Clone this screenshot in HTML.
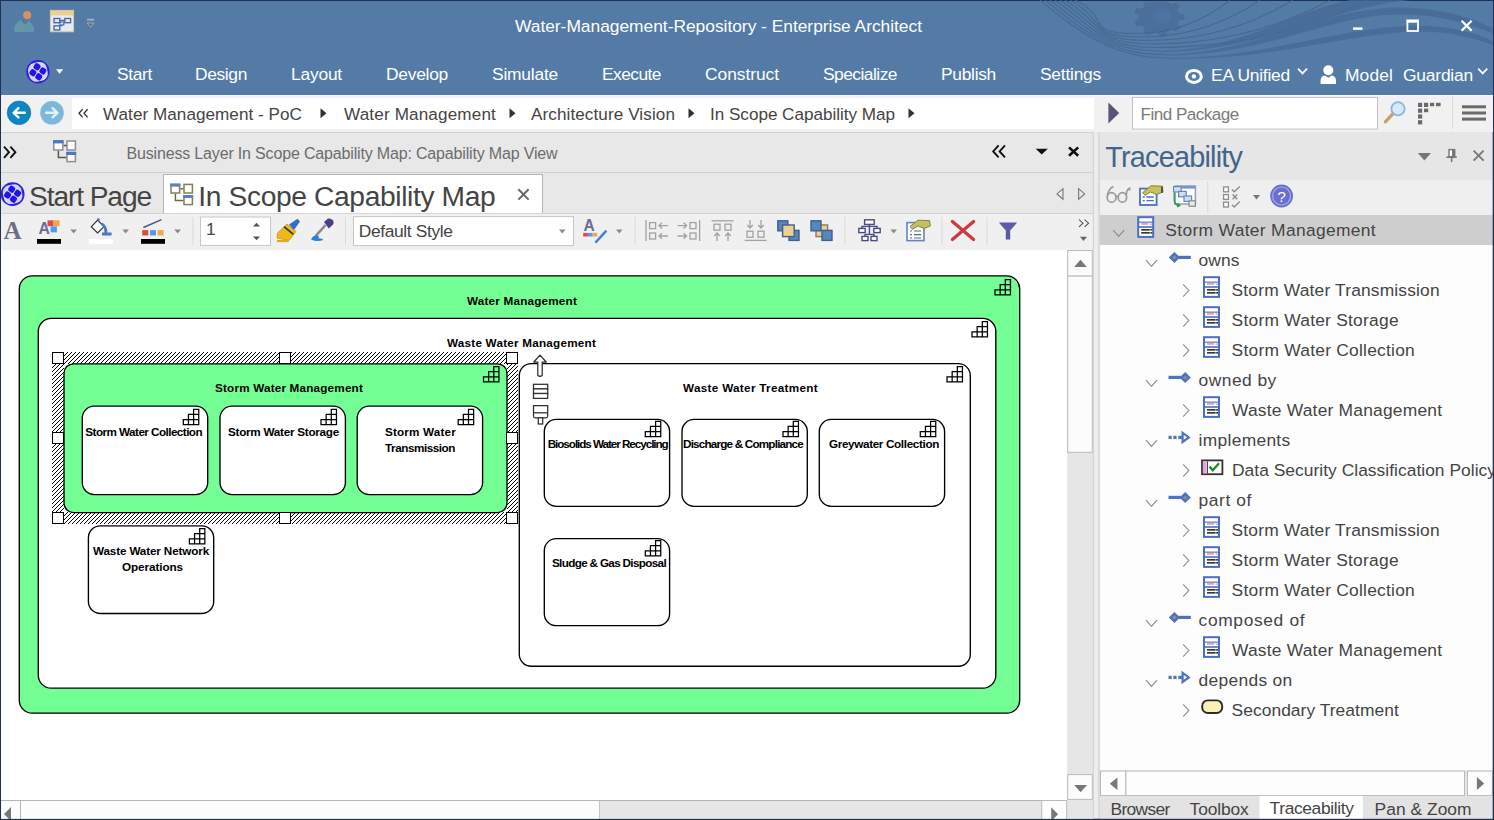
<!DOCTYPE html>
<html lang="en">
<head>
<meta charset="utf-8">
<title>Water-Management-Repository - Enterprise Architect</title>
<style>
*{box-sizing:border-box;margin:0;padding:0}
html,body{width:1494px;height:820px;overflow:hidden;background:#fff}
body{position:relative;font-family:"Liberation Sans",sans-serif;color:#444}
.a{position:absolute}
.t{position:absolute;white-space:nowrap;line-height:1;transform:translateY(-50%)}
.b{position:absolute;white-space:nowrap;line-height:1;transform:translate(-50%,-50%);font-weight:bold;color:#000;font-size:11.7px}
svg{position:absolute;overflow:visible}
/* title + ribbon */
#hdr{left:0;top:0;width:1494px;height:95px;background:#547ba6}
#hdr .t{color:#fff;font-size:17.4px}
/* address bar */
#addr{left:0;top:95px;width:1494px;height:37px;background:#f1f1f1}
#crumb{left:72px;top:97.7px;width:1022px;height:31.3px;background:#fff}
#addrtxt .t{font-size:17.1px;color:#444}
/* left doc area */
#dock{left:0;top:132px;width:1094px;height:688px;background:#e8e8e8}
#pbar{left:0;top:132px;width:1094px;height:40px;background:#e8e8e8;border-top:1px solid #d2d2d2}
#tabs{left:0;top:172px;width:1094px;height:41px;background:#e8e8e8;border-top:1px solid #d0d0d0}
#tabact{left:163px;top:174px;width:380px;height:40px;background:#fff;border:1px solid #b4b4b4;border-bottom:none}
#tbar{left:0;top:213px;width:1094px;height:37px;background:#f0f0f0;border-top:1px solid #d4d4d4}
#canvas{left:1px;top:250px;width:1067px;height:550px;background:#fff}
/* scrollbars */
.sbtn{position:absolute;background:#fff;border:1px solid #d0d0d0}
/* diagram */
.box{position:absolute;border:1.4px solid #000;background:#fff}

/* right panel */
#rp{left:1100px;top:132px;width:394px;height:688px;background:#fdfdfd}
#rph{left:1100px;top:132px;width:394px;height:48px;background:#e6e6e6}
#rpt{left:1100px;top:180px;width:394px;height:35px;background:#efefef}
#rsel{left:1100px;top:215px;width:394px;height:30px;background:#cecece}
#rp .t,.tr{font-size:17.4px;color:#444}
</style>
</head>
<body>
<!-- ===== header ===== -->
<div id="hdr" class="a">
  <div class="a" style="left:0;top:0;width:1494px;height:1.4px;background:#1f3050"></div>
  <div class="a" style="left:0;top:0;width:1.2px;height:820px;background:#1f3050;z-index:50"></div><div class="a" style="left:1492.8px;top:0;width:1.2px;height:820px;background:#1f3050;z-index:50"></div>
  <svg style="left:0;top:0" width="1494" height="95" viewBox="0 0 1494 95">
    <!-- decorative waves -->
<g fill-opacity=".7"><clipPath id="gclip"><path d="M1100,1.4 H1230 V60 H1100Z"/></clipPath><g clip-path="url(#gclip)"><polygon points="1184.3,14.4 1184.3,19.6 1179.0,20.5 1177.2,24.4 1180.5,27.7 1176.2,31.7 1171.4,29.7 1166.9,31.8 1166.6,36.0 1160.1,36.9 1158.1,33.0 1152.9,32.3 1149.2,35.4 1143.5,32.8 1145.1,28.8 1141.7,25.6 1136.4,26.2 1134.1,21.3 1138.7,19.1 1138.7,14.9 1134.1,12.7 1136.4,7.8 1141.7,8.4 1145.1,5.2 1143.5,1.2 1149.2,-1.4 1152.9,1.7 1158.1,1.0 1160.1,-2.9 1166.6,-2.0 1166.9,2.2 1171.4,4.3 1176.2,2.3 1180.5,6.3 1177.2,9.6 1179.0,13.5" fill="#466b96"/><ellipse cx="1162" cy="16" rx="9.5" ry="7.6" fill="#4f76a3"/></g></g>
<g fill="none" stroke="#41658f" stroke-opacity=".8" stroke-width="1.1">
<path d="M1040,0 C1078.0,31.9 1113.0,58.0 1168.0,58.0 "/>
<path d="M1045,0 C1083.0,30.0 1108.5,54.5 1163.5,54.5 "/>
<path d="M1050,0 C1088.0,28.1 1104.0,51.0 1159.0,51.0 "/>
<path d="M1055,0 C1093.0,26.1 1099.5,47.5 1154.5,47.5 Q1271.9,47.5 1368,0"/>
<path d="M1060,0 C1098.0,24.2 1095.0,44.0 1150.0,44.0 Q1249.0,44.0 1330,0"/>
<path d="M1065,0 C1103.0,22.3 1090.5,40.5 1145.5,40.5 Q1226.6,40.5 1293,0"/>
<path d="M1070,0 C1108.0,20.4 1086.0,37.0 1141.0,37.0 Q1206.5,37.0 1260,0"/>
<path d="M1075,0 C1113.0,18.4 1081.5,33.5 1136.5,33.5 Q1187.9,33.5 1230,0"/>
</g>
<g fill="#456a96" fill-opacity=".8">
<path d="M1168,58 C1260,58 1330,30 1405,26 C1445,24 1475,32 1494,42 L1494,46 C1470,36 1440,30 1405,32 C1340,36 1270,60 1168,59Z"/>
<path d="M1163,54.5 C1250,54 1310,14 1385,8 C1430,5 1470,16 1494,29 L1494,34 C1465,22 1430,12 1385,15 C1320,20 1260,56 1163,55.5Z"/>
<path d="M1159,51 C1240,50 1290,12 1350,0 L1410,0 C1330,8 1260,52 1159,52Z"/>
</g>
    <!-- person/mountain icon -->
    <circle cx="27.2" cy="15.1" r="4.1" fill="#d8905e"/>
    <path d="M14.4,32 V26 L20.2,19.8 L25,25 L29.2,20.8 L33.9,27 V32 Z" fill="#6397a8"/>
    <!-- diagram icon -->
    <rect x="50.4" y="10.4" width="23.2" height="21.4" fill="#e6ebf2" stroke="#d8c4a2" stroke-width="1"/>
    <rect x="51" y="11" width="22" height="4.4" fill="#ecd092"/>
    <g fill="#dce8f8" stroke="#4667a0" stroke-width="1.35"><rect x="54" y="18.5" width="5.8" height="4.2"/><rect x="64.8" y="18.5" width="5.8" height="4.2"/><rect x="54" y="25.8" width="5.8" height="4.2"/><rect x="60" y="22" width="3.8" height="3" stroke-width="1.1"/></g>
    <path d="M59.8,20.4h5 M59.8,25.6h2.4" stroke="#4667a0" stroke-width="1.1" fill="none"/>
    <!-- qat dropdown -->
    <rect x="87" y="18.8" width="7.2" height="1.7" fill="#a9b3c4"/>
    <path d="M87,23 h7.2 l-3.6,4.4z" fill="#6b6f7a" stroke="#aab6c8" stroke-width=".8"/>
    <!-- globe logo -->
    <circle cx="37.9" cy="71.8" r="11.7" fill="#2a20e2"/><rect x="28.4" y="62.3" width="19" height="19" rx="7.4" fill="#d8d4ff" transform="rotate(-12 37.9 71.8)"/><g fill="#2016e4" transform="rotate(-10 37.9 71.8)"><rect x="34.75" y="63.55" width="6.3" height="6.3" rx="2" transform="rotate(45 37.9 66.7)"/><rect x="39.85" y="68.65" width="6.3" height="6.3" rx="2" transform="rotate(45 43.0 71.8)"/><rect x="34.75" y="73.75" width="6.3" height="6.3" rx="2" transform="rotate(45 37.9 76.9)"/><rect x="29.65" y="68.65" width="6.3" height="6.3" rx="2" transform="rotate(45 32.8 71.8)"/></g>
    <path d="M56,69.2 h7.2 l-3.6,4.6z" fill="#fff"/>
    <!-- window buttons -->
    <rect x="1353" y="27.4" width="9.5" height="2.4" fill="#fff"/>
    <rect x="1407.4" y="20.6" width="10.6" height="10.4" fill="none" stroke="#fff" stroke-width="1.8"/><rect x="1406.5" y="19.7" width="12.4" height="3" fill="#fff"/>
    <path d="M1461.6,20.8 L1471.6,30.8 M1471.6,20.8 L1461.6,30.8" stroke="#fff" stroke-width="2.3"/>
    <!-- eye -->
    <ellipse cx="1193.9" cy="76.4" rx="7.4" ry="6" fill="none" stroke="#fff" stroke-width="3"/><circle cx="1193.9" cy="76.4" r="2.2" fill="#fff"/>
    <path d="M1298,68.6 l4.5,4.8 l4.5,-4.8" fill="none" stroke="#fff" stroke-width="1.7"/>
    <path d="M1478.2,68.6 l4.5,4.8 l4.5,-4.8" fill="none" stroke="#fff" stroke-width="1.7"/>
    <!-- user -->
    <circle cx="1328.3" cy="70.2" r="5" fill="#fff"/><path d="M1320.6,84 v-3.4 q0,-4.6 4.4,-5.2 l3.3,2.4 l3.3,-2.4 q4.4,.6 4.4,5.2 v3.4z" fill="#fff"/>
  </svg>

  <span class="t" style="letter-spacing:-0.024px;left:515px;top:27px">Water-Management-Repository - Enterprise Architect</span>
  <span class="t" style="letter-spacing:-0.347px;left:117px;top:75px">Start</span>
  <span class="t" style="letter-spacing:-0.357px;left:195px;top:75px">Design</span>
  <span class="t" style="letter-spacing:-0.203px;left:291px;top:75px">Layout</span>
  <span class="t" style="letter-spacing:-0.259px;left:386px;top:75px">Develop</span>
  <span class="t" style="letter-spacing:-0.209px;left:492px;top:75px">Simulate</span>
  <span class="t" style="letter-spacing:-0.549px;left:602px;top:75px">Execute</span>
  <span class="t" style="letter-spacing:-0.047px;left:705px;top:75px">Construct</span>
  <span class="t" style="letter-spacing:-0.528px;left:823px;top:75px">Specialize</span>
  <span class="t" style="letter-spacing:-0.292px;left:941px;top:75px">Publish</span>
  <span class="t" style="letter-spacing:-0.230px;left:1040px;top:75px">Settings</span>
  <span class="t" style="letter-spacing:-0.222px;left:1211px;top:76px">EA Unified</span>
  <span class="t" style="letter-spacing:0.125px;left:1345px;top:76px">Model</span>
  <span class="t" style="letter-spacing:-0.193px;left:1403px;top:76px">Guardian</span>
</div>
<!-- ===== address bar ===== -->
<div id="addr" class="a"></div>
<div id="crumb" class="a"></div>
<div id="addrtxt">
  <div class="a" style="left:0;top:95px;width:1494px;height:1px;background:#f7fafc"></div>
  <svg style="left:0;top:95px" width="1494" height="38" viewBox="0 95 1494 38">
    <circle cx="19" cy="112.8" r="11.8" fill="#0f86c4"/><circle cx="19" cy="112.8" r="11.8" fill="none" stroke="#0a6ea6" stroke-width="1" stroke-opacity=".6"/>
    <path d="M24.8,112.8 H14 M18.4,108.2 L13.6,112.8 L18.4,117.4" fill="none" stroke="#fff" stroke-width="2.4" stroke-linecap="round" stroke-linejoin="round"/>
    <circle cx="52" cy="112.8" r="11.8" fill="#7db7da"/>
    <path d="M46.2,112.8 H57 M52.6,108.2 L57.4,112.8 L52.6,117.4" fill="none" stroke="#e4f1f9" stroke-width="2.4" stroke-linecap="round" stroke-linejoin="round"/>
    <path d="M82.6,109.2 l-3.6,4.1 l3.6,4.1 M87.6,109.2 l-3.6,4.1 l3.6,4.1" fill="none" stroke="#333" stroke-width="1.3"/>
    <g fill="#333"><path d="M320.5,108.3 l6,5 l-6,5z"/><path d="M509.5,108.3 l6,5 l-6,5z"/><path d="M688.5,108.3 l6,5 l-6,5z"/><path d="M908.5,108.3 l6,5 l-6,5z"/></g>
    <path d="M1108.4,102.6 L1119.2,113 L1108.4,123.4Z" fill="#57567a"/>
    <rect x="1132.5" y="97.5" width="245" height="31.6" fill="#fff" stroke="#c2c2c2" stroke-width="1"/>
    <!-- magnifier -->
    <path d="M1385.4,121.8 L1393,113.6" stroke="#c9a06a" stroke-width="3.2" stroke-linecap="round"/>
    <circle cx="1398" cy="108.8" r="6.6" fill="#d6e8fb" stroke="#8db3e2" stroke-width="1.8"/>
    <!-- dotted icon -->
    <g fill="#6a6a6a"><rect x="1418" y="102.8" width="4.2" height="4.2"/><rect x="1424" y="102.8" width="4.2" height="4.2"/><rect x="1430" y="102.8" width="4.2" height="3.4"/><rect x="1436" y="102.8" width="4.6" height="3.4"/><rect x="1418" y="108.6" width="4.2" height="4.2"/><rect x="1424" y="108.6" width="4.2" height="3.6"/><rect x="1418" y="114.4" width="4.2" height="4.2"/><rect x="1418" y="120.2" width="4.2" height="4.2"/></g>
    <rect x="1452" y="96" width="1" height="33" fill="#dcdcdc"/>
    <g fill="#6b6b6b"><rect x="1462" y="105.3" width="24" height="3"/><rect x="1462" y="111.5" width="24" height="3"/><rect x="1462" y="117.6" width="24" height="3"/></g>
  </svg>
  <span class="t" style="letter-spacing:0.049px;left:103px;top:115.4px">Water Management - PoC</span>
  <span class="t" style="letter-spacing:0.157px;left:344px;top:115.4px">Water Management</span>
  <span class="t" style="letter-spacing:0.095px;left:531px;top:115.4px">Architecture Vision</span>
  <span class="t" style="letter-spacing:-0.013px;left:710px;top:115.4px">In Scope Capability Map</span>
  <span class="t" style="letter-spacing:-0.544px;left:1140.6px;top:115.4px;color:#7a7a7a">Find Package</span>
</div>
<!-- ===== left dock ===== -->
<div id="dock" class="a"></div>
<div id="pbar" class="a"></div>
<div id="tabs" class="a"></div>
<div id="tabact" class="a"></div>
<div id="tbar" class="a"></div>
<div id="canvas" class="a"></div>
<div id="docktop">
  <svg style="left:0;top:132px" width="1100" height="120" viewBox="0 132 1100 120">
    <!-- panel bar -->
    <path d="M4,146.6 l5,5.6 l-5,5.6 M10.4,146.6 l5,5.6 l-5,5.6" fill="none" stroke="#111" stroke-width="1.9"/>
    <g><rect x="53.8" y="141" width="9" height="9" fill="#fff" stroke="#8e8e8e" stroke-width="1.5"/><rect x="53" y="140.2" width="10.6" height="3.2" fill="#4a78c4"/>
       <rect x="67" y="141" width="8.4" height="9" fill="#fff" stroke="#8e8e8e" stroke-width="1.5"/>
       <rect x="67" y="152.6" width="8.4" height="9" fill="#fff" stroke="#8e8e8e" stroke-width="1.5"/><rect x="66.2" y="151.8" width="10" height="3.2" fill="#4a78c4"/>
       <path d="M63.6,145.6h3 M58.4,150.8v6.6h8" fill="none" stroke="#555" stroke-width="1.5"/></g>
    <path d="M998.6,145.4 l-5.4,6 l5.4,6 M1005,145.4 l-5.4,6 l5.4,6" fill="none" stroke="#111" stroke-width="1.9"/>
    <path d="M1035.6,148.8 h12.2 l-6.1,5.8z" fill="#111"/>
    <path d="M1069,147.4 l9.2,8.4 M1078.2,147.4 l-9.2,8.4" stroke="#111" stroke-width="2.6"/>
    <!-- tab nav arrows -->
    <path d="M1063,188.6 v10.6 l-6,-5.3z M1078.6,188.6 v10.6 l6,-5.3z" fill="none" stroke="#777" stroke-width="1.1"/>
    <!-- start page logo -->
    <circle cx="12.6" cy="194.2" r="11.9" fill="#2a20e2"/><rect x="3.1" y="184.7" width="19" height="19" rx="7.4" fill="#d8d4ff" transform="rotate(-12 12.6 194.2)"/><g fill="#2016e4" transform="rotate(-10 12.6 194.2)"><rect x="9.45" y="185.95" width="6.3" height="6.3" rx="2" transform="rotate(45 12.6 189.1)"/><rect x="14.55" y="191.05" width="6.3" height="6.3" rx="2" transform="rotate(45 17.7 194.2)"/><rect x="9.45" y="196.15" width="6.3" height="6.3" rx="2" transform="rotate(45 12.6 199.3)"/><rect x="4.35" y="191.05" width="6.3" height="6.3" rx="2" transform="rotate(45 7.5 194.2)"/></g>
    <!-- in scope tab icon -->
    <g><rect x="171" y="184.4" width="8.6" height="8.6" fill="#fff" stroke="#7e7e58" stroke-width="1.5"/><rect x="170.2" y="183.6" width="10.2" height="3" fill="#5c7fc0"/>
       <rect x="184" y="184.4" width="8.4" height="8.6" fill="#fff" stroke="#7e7e58" stroke-width="1.5"/>
       <rect x="184" y="195.8" width="8.4" height="8.8" fill="#fff" stroke="#7e7e58" stroke-width="1.5"/><rect x="183.2" y="195" width="10" height="3" fill="#5c7fc0"/>
       <path d="M180.4,188.8h3 M175.4,193.8v6.6h8" fill="none" stroke="#6a6a4a" stroke-width="1.5"/></g>
    <path d="M518.4,189.2 l10.2,10.4 M528.6,189.2 l-10.2,10.4" stroke="#666" stroke-width="2"/>
    <!-- toolbar -->
    <g id="tbicons">
      <!-- font color -->
      <rect x="37" y="239" width="24" height="4.8" fill="#000"/>
      <rect x="47.5" y="220.3" width="6" height="5.9" fill="#e04a4a"/><rect x="53.5" y="220.3" width="6.1" height="5.9" fill="#f2a64a"/><rect x="50.6" y="226.4" width="6.3" height="6" fill="#4aa0e8"/>
      <path d="M70.3,229.4 h6.6 l-3.3,4.2z" fill="#8a8a8a"/>
      <!-- fill -->
      <rect x="89" y="239" width="24" height="4.8" fill="#fff"/>
      <path d="M91.2,226.8 L97.6,220.2 L104,226.6 L97.6,233Z" fill="#fff" stroke="#333" stroke-width="1.2"/><path d="M97.6,220.2 l.6,-1.6 l1.8,1.4" fill="none" stroke="#4a78c4" stroke-width="1.2"/>
      <path d="M102.4,222.6 q5.6,4.4 4.8,10 h4.4 v2.8 h-9.6 v-2.8 h2.4 q.6,-4.4 -3.6,-8z" fill="#4a78c4"/>
      <path d="M122.3,229.4 h6.6 l-3.3,4.2z" fill="#8a8a8a"/>
      <!-- line color -->
      <rect x="141" y="239" width="24" height="4.8" fill="#000"/>
      <path d="M143.4,227.5 L161.5,219.6" stroke="#55557a" stroke-width="1.5"/>
      <rect x="142.2" y="230.1" width="6.1" height="5.4" fill="#e04a4a"/><rect x="150" y="230.1" width="6" height="5.4" fill="#4aa0e8"/><rect x="157.6" y="230.1" width="6" height="5.4" fill="#f2a64a"/>
      <path d="M174.3,229.4 h6.6 l-3.3,4.2z" fill="#8a8a8a"/>
      <rect x="192.5" y="217" width="1" height="28" fill="#dadada"/>
      <rect x="200.5" y="217" width="70" height="28.4" fill="#fff" stroke="#c8c8c8"/>
      <path d="M253,226.6 l3.5,-3.9 l3.5,3.9z M253,236.4 l3.5,3.9 l3.5,-3.9z" fill="#555"/>
      <!-- brush -->
      <path d="M277.5,233 L287,224 L296,231.5 L289,240.5 L277,238Z" fill="#f0b81c" stroke="#c8960a" stroke-width=".8"/>
      <path d="M289,224.6 L297.6,218.8 L300,221.6 L294,230Z" fill="#2f6fd0"/>
      <path d="M284,226.6 L293.4,234.4" stroke="#333" stroke-width="1.6"/>
      <path d="M277,241 h11.6" stroke="#e8a81a" stroke-width="2.2"/>
      <!-- dropper -->
      <path d="M324,222 l4,-3.4 q3,-.6 4.8,1.6 q1.6,2.4 0,4.6 l-4,3.6z" fill="#4a3f8c"/>
      <path d="M325.6,225 L316,235.6" stroke="#8a8a8a" stroke-width="2.6"/>
      <path d="M311,239.4 q3,-5 7,-3.8 q1.6,1 .6,2.6 q4,.2 4.6,1.8 q-6,2.4 -12.2,-.6z" fill="#2f7fd6"/>
      <rect x="345" y="217" width="1" height="28" fill="#dadada"/>
      <rect x="353.5" y="216.6" width="220" height="29" fill="#fff" stroke="#c6c6c6"/>
      <path d="M559,229.4 h6.6 l-3.3,4.2z" fill="#8a8a8a"/>
      <!-- A/ style -->
      <rect x="583.2" y="232.9" width="4.7" height="3.6" fill="#e04a4a"/><rect x="587.9" y="232.9" width="4.7" height="3.6" fill="#4aa0e8"/><rect x="592.6" y="232.9" width="4.7" height="3.6" fill="#f2a64a"/>
      <path d="M595.4,242.6 L606.4,230.6" stroke="#3f83d6" stroke-width="2.4"/>
      <path d="M616,229.4 h6.6 l-3.3,4.2z" fill="#8a8a8a"/>
      <rect x="634.5" y="217" width="1" height="28" fill="#dadada"/>
      <!-- align icons (gray) -->
      <g fill="none" stroke="#a2a2a2" stroke-width="1.3">
        <path d="M646,220v21"/><rect x="649.6" y="222.6" width="6" height="6"/><rect x="649.6" y="233" width="6" height="6"/><path d="M668,225.6h-9m3,-2.8l-3,2.8l3,2.8 M668,236h-9m3,-2.8l-3,2.8l3,2.8"/>
        <path d="M699.6,220v21"/><rect x="690" y="222.6" width="6" height="6"/><rect x="690" y="233" width="6" height="6"/><path d="M677.6,225.6h9m-3,-2.8l3,2.8l-3,2.8 M677.6,236h9m-3,-2.8l3,2.8l-3,2.8"/>
        <path d="M711.6,220.8h22"/><rect x="714" y="224.2" width="6" height="6"/><rect x="725" y="224.2" width="6" height="6"/><path d="M717,241v-8m-2.8,3l2.8,-3l2.8,3 M728,241v-8m-2.8,3l2.8,-3l2.8,3"/>
        <path d="M744.6,240.4h22"/><rect x="747" y="231.2" width="6" height="6"/><rect x="758" y="231.2" width="6" height="6"/><path d="M750,220v8m-2.8,-3l2.8,3l2.8,-3 M761,220v8m-2.8,-3l2.8,3l2.8,-3"/>
      </g>
      <!-- bring front / send back -->
      <g stroke="#3f5f90" stroke-width="1.4">
        <rect x="777.8" y="220.8" width="10" height="10" fill="#5a86c0"/><rect x="789" y="230.4" width="10" height="10" fill="#5a86c0"/><rect x="782.6" y="225" width="11.6" height="11.6" fill="#f0cf8c"/>
        <rect x="816" y="225" width="11.6" height="11.6" fill="#f0cf8c" stroke="#8a7a5a"/><rect x="811" y="220.8" width="10" height="10" fill="#5a86c0"/><rect x="822" y="230.4" width="10" height="10" fill="#5a86c0"/>
      </g>
      <rect x="844.5" y="217" width="1" height="28" fill="#dadada"/>
      <!-- hierarchy -->
      <g fill="#fff" stroke="#4a4a8c" stroke-width="1.4"><rect x="864.6" y="219.8" width="9.6" height="4.6"/><rect x="858.8" y="228.4" width="6.4" height="4.2"/><rect x="873.8" y="228.4" width="6.4" height="4.2"/><rect x="862" y="236.4" width="6" height="4.2"/><rect x="871" y="236.4" width="6" height="4.2"/><path d="M869.4,224.4v2h-7.4v2 M869.4,226.4h7.6v2 M869.4,226.4v8h-4.4v2 M869.4,234.4h4.6v2" fill="none"/></g>
      <path d="M890.4,229.4 h6.6 l-3.3,4.2z" fill="#8a8a8a"/>
      <!-- properties -->
      <rect x="907" y="222.6" width="17" height="18" fill="#fff" stroke="#6482bc" stroke-width="1.6"/>
      <path d="M910,231h2 M914,231h7 M910,234.6h2 M914,234.6h7 M910,238h2 M914,238h7" stroke="#4a6a9a" stroke-width="1.2"/>
      <path d="M910,226.4 L918,220.2 L929.6,220.6 L930.4,226 L924,228.4 L918,226 L912.4,229.2Z" fill="#c8c060" stroke="#7a7a3a" stroke-width=".9"/>
      <rect x="941.4" y="217" width="1" height="28" fill="#dadada"/>
      <path d="M952.4,221.4 L973.6,239.4 M973.6,221.4 L952.4,239.4" stroke="#cb3c40" stroke-width="3.3" stroke-linecap="round"/>
      <rect x="986.4" y="217" width="1" height="28" fill="#dadada"/>
      <path d="M998.8,222.4 h18.4 l-7,8 v9 h-4.4 v-9z" fill="#5c5ca6"/>
      <path d="M1079,219.6 l4,3.6 l-4,3.6 M1084.6,219.6 l4,3.6 l-4,3.6" fill="none" stroke="#555" stroke-width="1.1"/>
      <path d="M1080,236.8 h7 l-3.5,4.2z" fill="#666"/>
    </g>
  </svg>
  <span class="t" style="letter-spacing:-0.167px;left:126.5px;top:153.9px;font-size:16px;color:#6c6c6c">Business Layer In Scope Capability Map: Capability Map View</span>
  <span class="t" style="letter-spacing:-1.120px;left:29px;top:195.6px;font-size:28.2px">Start Page</span>
  <span class="t" style="letter-spacing:-0.372px;left:198.3px;top:195.6px;font-size:28.2px">In Scope Capability Map</span>
  <span class="t" style="letter-spacing:-0.062px;left:3.6px;top:229.6px;font-size:25px;font-weight:bold;font-family:'Liberation Serif',serif;color:#6f6d84">A</span>
  <span class="t" style="letter-spacing:-0.422px;left:38.4px;top:228.8px;font-size:15.8px;font-weight:bold;color:#6d6b98">A</span>
  <span class="t" style="letter-spacing:-3.672px;left:206px;top:230.4px;font-size:17.4px">1</span>
  <span class="t" style="letter-spacing:-0.355px;left:358.7px;top:232px;font-size:17.4px">Default Style</span>
  <span class="t" style="letter-spacing:0.334px;left:583.4px;top:226.3px;font-size:15.6px;font-weight:bold;color:#6c6a98">A</span>
</div>
<!-- ===== diagram ===== -->
<div id="dia">
<svg id="dsvg" style="left:0;top:0" width="1094" height="820" viewBox="0 0 1094 820">
<defs><pattern id="hatch" width="4" height="4" patternUnits="userSpaceOnUse" shape-rendering="crispEdges"><rect width="4" height="4" fill="#fff"/><path d="M3,0h1v1h-1zM2,1h1v1h-1zM1,2h1v1h-1zM0,3h1v1h-1z" fill="#000"/></pattern></defs>
<rect x="19.3" y="275.8" width="1000.4" height="437.4" rx="13" fill="#73ff94" stroke="#000" stroke-width="1.35"/>
<path transform="translate(995,279.5)" d="M0,10.3h5.15v-5.15h5.15v-5.15h5.15v15.450000000000001h-15.450000000000001z M5.15,10.3v5.15 M10.3,5.15v10.3 M5.15,10.3h10.3 M10.3,5.15h5.15" fill="none" stroke="#000" stroke-width="1.25"/>
<rect x="38.3" y="318.4" width="957.5" height="369.8" rx="13" fill="#fff" stroke="#000" stroke-width="1.35"/>
<path transform="translate(972,321.5)" d="M0,10.3h5.15v-5.15h5.15v-5.15h5.15v15.450000000000001h-15.450000000000001z M5.15,10.3v5.15 M10.3,5.15v10.3 M5.15,10.3h10.3 M10.3,5.15h5.15" fill="none" stroke="#000" stroke-width="1.25"/>
<path fill-rule="evenodd" fill="url(#hatch)" d="M52,352H518V524H52Z M64,364V512H507V364Z"/>
<rect x="64" y="363.8" width="443.0" height="148.8" rx="9.5" fill="#73ff94" stroke="#000" stroke-width="1.35"/>
<path transform="translate(483.5,366.5)" d="M0,10.3h5.15v-5.15h5.15v-5.15h5.15v15.450000000000001h-15.450000000000001z M5.15,10.3v5.15 M10.3,5.15v10.3 M5.15,10.3h10.3 M10.3,5.15h5.15" fill="none" stroke="#000" stroke-width="1.25"/>
<rect x="52.5" y="352.5" width="11" height="11" fill="#fff" stroke="#000" stroke-width="1"/>
<rect x="52.5" y="432.5" width="11" height="11" fill="#fff" stroke="#000" stroke-width="1"/>
<rect x="52.5" y="512.5" width="11" height="11" fill="#fff" stroke="#000" stroke-width="1"/>
<rect x="279.5" y="352.5" width="11" height="11" fill="#fff" stroke="#000" stroke-width="1"/>
<rect x="279.5" y="512.5" width="11" height="11" fill="#fff" stroke="#000" stroke-width="1"/>
<rect x="506.5" y="352.5" width="11" height="11" fill="#fff" stroke="#000" stroke-width="1"/>
<rect x="506.5" y="432.5" width="11" height="11" fill="#fff" stroke="#000" stroke-width="1"/>
<rect x="506.5" y="512.5" width="11" height="11" fill="#fff" stroke="#000" stroke-width="1"/>
<rect x="82.3" y="406.1" width="125.4" height="88.5" rx="12" fill="#fff" stroke="#000" stroke-width="1.35"/>
<path transform="translate(183.3,409.3)" d="M0,10.3h5.15v-5.15h5.15v-5.15h5.15v15.450000000000001h-15.450000000000001z M5.15,10.3v5.15 M10.3,5.15v10.3 M5.15,10.3h10.3 M10.3,5.15h5.15" fill="none" stroke="#000" stroke-width="1.25"/>
<rect x="220.0" y="406.1" width="125.4" height="88.5" rx="12" fill="#fff" stroke="#000" stroke-width="1.35"/>
<path transform="translate(321.0,409.3)" d="M0,10.3h5.15v-5.15h5.15v-5.15h5.15v15.450000000000001h-15.450000000000001z M5.15,10.3v5.15 M10.3,5.15v10.3 M5.15,10.3h10.3 M10.3,5.15h5.15" fill="none" stroke="#000" stroke-width="1.25"/>
<rect x="357.2" y="406.1" width="125.4" height="88.5" rx="12" fill="#fff" stroke="#000" stroke-width="1.35"/>
<path transform="translate(458.2,409.3)" d="M0,10.3h5.15v-5.15h5.15v-5.15h5.15v15.450000000000001h-15.450000000000001z M5.15,10.3v5.15 M10.3,5.15v10.3 M5.15,10.3h10.3 M10.3,5.15h5.15" fill="none" stroke="#000" stroke-width="1.25"/>
<rect x="88.4" y="525.8" width="125.3" height="87.7" rx="12" fill="#fff" stroke="#000" stroke-width="1.35"/>
<path transform="translate(189.4,528.5)" d="M0,10.3h5.15v-5.15h5.15v-5.15h5.15v15.450000000000001h-15.450000000000001z M5.15,10.3v5.15 M10.3,5.15v10.3 M5.15,10.3h10.3 M10.3,5.15h5.15" fill="none" stroke="#000" stroke-width="1.25"/>
<rect x="519.3" y="363.6" width="451.0" height="302.6" rx="12" fill="#fff" stroke="#000" stroke-width="1.35"/>
<path transform="translate(947,366.5)" d="M0,10.3h5.15v-5.15h5.15v-5.15h5.15v15.450000000000001h-15.450000000000001z M5.15,10.3v5.15 M10.3,5.15v10.3 M5.15,10.3h10.3 M10.3,5.15h5.15" fill="none" stroke="#000" stroke-width="1.25"/>
<rect x="544.3" y="419.4" width="125.3" height="86.9" rx="12" fill="#fff" stroke="#000" stroke-width="1.35"/>
<path transform="translate(645.3,421.3)" d="M0,10.3h5.15v-5.15h5.15v-5.15h5.15v15.450000000000001h-15.450000000000001z M5.15,10.3v5.15 M10.3,5.15v10.3 M5.15,10.3h10.3 M10.3,5.15h5.15" fill="none" stroke="#000" stroke-width="1.25"/>
<rect x="682.0" y="419.4" width="125.3" height="86.9" rx="12" fill="#fff" stroke="#000" stroke-width="1.35"/>
<path transform="translate(783.0,421.3)" d="M0,10.3h5.15v-5.15h5.15v-5.15h5.15v15.450000000000001h-15.450000000000001z M5.15,10.3v5.15 M10.3,5.15v10.3 M5.15,10.3h10.3 M10.3,5.15h5.15" fill="none" stroke="#000" stroke-width="1.25"/>
<rect x="819.3" y="419.4" width="125.3" height="86.9" rx="12" fill="#fff" stroke="#000" stroke-width="1.35"/>
<path transform="translate(920.3,421.3)" d="M0,10.3h5.15v-5.15h5.15v-5.15h5.15v15.450000000000001h-15.450000000000001z M5.15,10.3v5.15 M10.3,5.15v10.3 M5.15,10.3h10.3 M10.3,5.15h5.15" fill="none" stroke="#000" stroke-width="1.25"/>
<rect x="544.3" y="538.6" width="125.3" height="87.1" rx="12" fill="#fff" stroke="#000" stroke-width="1.35"/>
<path transform="translate(645.3,540.5)" d="M0,10.3h5.15v-5.15h5.15v-5.15h5.15v15.450000000000001h-15.450000000000001z M5.15,10.3v5.15 M10.3,5.15v10.3 M5.15,10.3h10.3 M10.3,5.15h5.15" fill="none" stroke="#000" stroke-width="1.25"/>
<path d="M540,355.2 L546.2,362 H542.2 V375.5 Q540,377 537.8,375.5 V362 H533.8 Z" fill="#fff" stroke="#2e2e2e" stroke-width="1.25" stroke-linejoin="round"/>
<g fill="#fff" stroke="#2e2e2e" stroke-width="1.25"><rect x="533.5" y="384.3" width="14.2" height="4.6"/><rect x="533.5" y="388.9" width="14.2" height="4.6"/><rect x="533.5" y="393.5" width="14.2" height="4.9"/></g>
<g fill="#fff" stroke="#2e2e2e" stroke-width="1.25"><path d="M533.5,405.5H547.7V416Q547.7,417.8 546,417.8H535.2Q533.5,417.8 533.5,416Z"/><path d="M533.5,412.8H547.7" /><rect x="538.3" y="417.8" width="4.4" height="6.2"/></g>
</svg>
<span class="b" style="letter-spacing:0.204px;left:522.0px;top:301px">Water Management</span>
<span class="b" style="letter-spacing:0.229px;left:521.5px;top:343px">Waste Water Management</span>
<span class="b" style="letter-spacing:0.193px;left:289.0px;top:388px">Storm Water Management</span>
<span class="b" style="letter-spacing:-0.550px;left:143.7px;top:432.3px">Storm Water Collection</span>
<span class="b" style="letter-spacing:-0.254px;left:283.5px;top:432.3px">Storm Water Storage</span>
<span class="b" style="letter-spacing:0.176px;left:420.5px;top:432.3px">Storm Water</span>
<span class="b" style="letter-spacing:-0.447px;left:420.0px;top:448px">Transmission</span>
<span class="b" style="letter-spacing:0.315px;left:750.5px;top:388px">Waste Water Treatment</span>
<span class="b" style="letter-spacing:-1.054px;left:607.7px;top:444px">Biosolids Water Recycling</span>
<span class="b" style="letter-spacing:-0.805px;left:743.0px;top:444px">Discharge &amp; Compliance</span>
<span class="b" style="letter-spacing:-0.346px;left:884.0px;top:444px">Greywater Collection</span>
<span class="b" style="letter-spacing:-0.664px;left:609.0px;top:563px">Sludge &amp; Gas Disposal</span>
<span class="b" style="letter-spacing:-0.139px;left:151.0px;top:551px">Waste Water Network</span>
<span class="b" style="letter-spacing:-0.070px;left:152.5px;top:567px">Operations</span>
</div>
<div id="scroll">
  <svg style="left:0;top:244px" width="1100" height="576" viewBox="0 244 1100 576">
    <!-- vertical -->
    <rect x="1067.2" y="250" width="25.6" height="550" fill="#e6e6e6"/>
    <rect x="1067.7" y="250.5" width="24.6" height="25.6" fill="#fcfcfc" stroke="#b9b9b9"/>
    <rect x="1067.7" y="276.1" width="24.6" height="176.2" fill="#fcfcfc" stroke="#b9b9b9"/>
    <rect x="1067.7" y="774.6" width="24.6" height="24.8" fill="#fcfcfc" stroke="#b9b9b9"/>
    <path d="M1074.2,266.9 h12.6 l-6.3,-7.1z M1074.2,785 h12.8 l-6.4,7.2z" fill="#777"/>
    <!-- horizontal -->
    <rect x="1" y="800" width="1092" height="20" fill="#e6e6e6"/>
    <rect x="1" y="800" width="1066" height="1" fill="#b4b4b4"/>
    <rect x="1.2" y="801" width="18.8" height="19" fill="#fcfcfc"/>
    <rect x="20" y="801" width="1" height="19" fill="#b4b4b4"/>
    <rect x="21" y="801" width="578" height="19" fill="#fcfcfc"/><rect x="599" y="801" width="1" height="19" fill="#c4c4c4"/>
    <rect x="1041.7" y="800.5" width="25" height="20" fill="#fcfcfc" stroke="#b9b9b9"/>
    <path d="M11,807 v14 l-7,-7z M1051.2,807.2 v14 l6.8,-7z" fill="#777"/>
    <!-- splitter -->
    <rect x="1092.8" y="132" width="1.6" height="688" fill="#d4d4d4"/><rect x="1094.4" y="132" width="3.3" height="688" fill="#ededed"/>
    <rect x="1097.7" y="132" width="2.3" height="688" fill="#dbdbdb"/>
    <rect x="0" y="818.9" width="1100" height="1.2" fill="#1f3050"/>
  </svg>
</div>
<!-- ===== right panel ===== -->
<div id="rp" class="a"></div>
<div id="rph" class="a"></div>
<div id="rpt" class="a"></div>
<div id="rsel" class="a"></div>
<div id="tree">
      <svg style="left:1094px;top:132px" width="400" height="688" viewBox="1094 132 400 688">
    <!-- title buttons -->
    <path d="M1417.8,153 h13.2 l-6.6,7.4z" fill="#777"/>
    <rect x="1449" y="149.6" width="5.6" height="7" fill="#fff" stroke="#777" stroke-width="1.4"/><rect x="1452" y="149.6" width="3.2" height="7" fill="#777"/><rect x="1446.4" y="156.4" width="10.4" height="1.6" fill="#777"/><rect x="1450.9" y="158" width="1.5" height="4" fill="#777"/>
    <path d="M1473.6,150.6 l10,10 M1483.6,150.6 l-10,10" stroke="#777" stroke-width="1.9"/>
    <!-- toolbar: glasses -->
    <g fill="none" stroke="#9a9a9a" stroke-width="1.7"><ellipse cx="1111.6" cy="197.4" rx="4.4" ry="4.8"/><ellipse cx="1122.4" cy="197.4" rx="4.2" ry="4.8"/><path d="M1116,196.4h2.2 M1107.4,195.6 q1,-6.6 6,-9 M1126.4,195.4 q-.4,-5.6 3.2,-7.2 v2.4"/></g>
    <!-- properties -->
    <rect x="1140" y="188.6" width="16.6" height="16.4" fill="#fff" stroke="#4a6ec2" stroke-width="1.8"/>
    <path d="M1142.8,197h2 M1146.4,197h7.4 M1142.8,200.6h2 M1146.4,200.6h7.4" stroke="#4a6ec2" stroke-width="1.3"/>
    <path d="M1142.6,192.6 L1151,185.8 L1162.4,186.2 L1163,191.8 L1156.6,194.6 L1150.6,192 L1145,195.4Z" fill="#c9c160" stroke="#77772f" stroke-width=".9"/><rect x="1161" y="186.6" width="2" height="6.4" fill="#555"/>
    <!-- diagram w/ arrow -->
    <rect x="1175" y="186" width="20.4" height="18" fill="#fff" stroke="#8aa0c8" stroke-width="1.5"/><rect x="1175" y="186" width="20.4" height="2.6" fill="#7a96c8"/>
    <g fill="#cfe0f6" stroke="#6a86b8" stroke-width="1.2"><rect x="1173.6" y="186.6" width="7.6" height="5.4"/><rect x="1178.6" y="191.4" width="7.6" height="5.4"/><rect x="1184" y="196" width="7.6" height="5.4"/><rect x="1189" y="200.8" width="6.4" height="5.4" fill="#e8e8e8" stroke="#888"/></g>
    <path d="M1174.4,193 v7 q0,5 5,5.6" fill="none" stroke="#2e9a4a" stroke-width="1.6"/><path d="M1177.6,202.4 l3.4,3.4 l-4,1.6z" fill="#2e9a4a"/>
    <rect x="1207.3" y="181.4" width="1" height="31" fill="#d8d8d8"/>
    <!-- checklist -->
    <g fill="#fff" stroke="#8c8c8c" stroke-width="1.3"><rect x="1223.6" y="187" width="4.8" height="4.8"/><rect x="1223.6" y="194.6" width="4.8" height="4.8"/><rect x="1223.6" y="202.2" width="4.8" height="4.8"/></g>
    <g fill="none" stroke="#8c8c8c" stroke-width="1.4"><path d="M1232,189.6 l2.2,2.2 l5.6,-5.4 M1232,204.8 l2.2,2.2 l5.6,-5.4 M1232.6,194.6 l4.6,4.6 M1237.2,194.6 l-4.6,4.6"/></g>
    <path d="M1253,195 h7 l-3.5,4.4z" fill="#777"/>
    <!-- help -->
    <circle cx="1281.6" cy="196" r="11.4" fill="#6a6ecc"/><circle cx="1281.6" cy="196" r="9" fill="none" stroke="#a9acea" stroke-width="1.2"/>
    <path d="M1113.2,230.2 l5.5,6.2 l5.5,-6.2" fill="none" stroke="#8a8a8a" stroke-width="1.1"/><g transform="translate(1137.2,216.2)"><rect x="1" y="1" width="15" height="19.7" fill="#fff" stroke="#4a6ec2" stroke-width="2"/><rect x="1" y="5.4" width="15" height="1.1" fill="#4a6ec2"/><rect x="4" y="7.2" width="7" height="1.1" fill="#d06a8a"/><rect x="12.6" y="7.4" width="2" height="1" fill="#d06a8a"/><rect x="1" y="10" width="15" height="1.6" fill="#4a6ec2"/><rect x="4" y="12.9" width="8.6" height="1.5" fill="#222"/><rect x="13.2" y="12.9" width="1.8" height="1.5" fill="#222"/><rect x="4" y="15.9" width="8.6" height="1.5" fill="#222"/><rect x="13.2" y="15.9" width="1.8" height="1.5" fill="#222"/></g><path d="M1146,260.2 l5.5,6.2 l5.5,-6.2" fill="none" stroke="#8a8a8a" stroke-width="1.1"/><path d="M1174.4,257.4 H1190.8" stroke="#4f74bd" stroke-width="3.2"/><path d="M1168.8,257.4 l5.6,-5.5 l5.6,5.5 l-5.6,5.5z" fill="#4f74bd"/><circle cx="1174.4" cy="257.4" r="1.7" fill="#8c8c96"/><path d="M1183.2,284.3 l5.6,6.2 l-5.6,6.2" fill="none" stroke="#8a8a8a" stroke-width="1.1"/><g transform="translate(1203,276.2)"><rect x="1" y="1" width="15" height="19.7" fill="#fff" stroke="#4a6ec2" stroke-width="2"/><rect x="1" y="5.4" width="15" height="1.1" fill="#4a6ec2"/><rect x="4" y="7.2" width="7" height="1.1" fill="#d06a8a"/><rect x="12.6" y="7.4" width="2" height="1" fill="#d06a8a"/><rect x="1" y="10" width="15" height="1.6" fill="#4a6ec2"/><rect x="4" y="12.9" width="8.6" height="1.5" fill="#222"/><rect x="13.2" y="12.9" width="1.8" height="1.5" fill="#222"/><rect x="4" y="15.9" width="8.6" height="1.5" fill="#222"/><rect x="13.2" y="15.9" width="1.8" height="1.5" fill="#222"/></g><path d="M1183.2,314.3 l5.6,6.2 l-5.6,6.2" fill="none" stroke="#8a8a8a" stroke-width="1.1"/><g transform="translate(1203,306.2)"><rect x="1" y="1" width="15" height="19.7" fill="#fff" stroke="#4a6ec2" stroke-width="2"/><rect x="1" y="5.4" width="15" height="1.1" fill="#4a6ec2"/><rect x="4" y="7.2" width="7" height="1.1" fill="#d06a8a"/><rect x="12.6" y="7.4" width="2" height="1" fill="#d06a8a"/><rect x="1" y="10" width="15" height="1.6" fill="#4a6ec2"/><rect x="4" y="12.9" width="8.6" height="1.5" fill="#222"/><rect x="13.2" y="12.9" width="1.8" height="1.5" fill="#222"/><rect x="4" y="15.9" width="8.6" height="1.5" fill="#222"/><rect x="13.2" y="15.9" width="1.8" height="1.5" fill="#222"/></g><path d="M1183.2,344.3 l5.6,6.2 l-5.6,6.2" fill="none" stroke="#8a8a8a" stroke-width="1.1"/><g transform="translate(1203,336.2)"><rect x="1" y="1" width="15" height="19.7" fill="#fff" stroke="#4a6ec2" stroke-width="2"/><rect x="1" y="5.4" width="15" height="1.1" fill="#4a6ec2"/><rect x="4" y="7.2" width="7" height="1.1" fill="#d06a8a"/><rect x="12.6" y="7.4" width="2" height="1" fill="#d06a8a"/><rect x="1" y="10" width="15" height="1.6" fill="#4a6ec2"/><rect x="4" y="12.9" width="8.6" height="1.5" fill="#222"/><rect x="13.2" y="12.9" width="1.8" height="1.5" fill="#222"/><rect x="4" y="15.9" width="8.6" height="1.5" fill="#222"/><rect x="13.2" y="15.9" width="1.8" height="1.5" fill="#222"/></g><path d="M1146,380.2 l5.5,6.2 l5.5,-6.2" fill="none" stroke="#8a8a8a" stroke-width="1.1"/><path d="M1168.5,377.4 H1185" stroke="#4f74bd" stroke-width="3.2"/><path d="M1179.6,377.4 l5.6,-5.5 l5.6,5.5 l-5.6,5.5z" fill="#4f74bd"/><circle cx="1185.2" cy="377.4" r="1.7" fill="#8c8c96"/><path d="M1183.2,404.3 l5.6,6.2 l-5.6,6.2" fill="none" stroke="#8a8a8a" stroke-width="1.1"/><g transform="translate(1203,396.2)"><rect x="1" y="1" width="15" height="19.7" fill="#fff" stroke="#4a6ec2" stroke-width="2"/><rect x="1" y="5.4" width="15" height="1.1" fill="#4a6ec2"/><rect x="4" y="7.2" width="7" height="1.1" fill="#d06a8a"/><rect x="12.6" y="7.4" width="2" height="1" fill="#d06a8a"/><rect x="1" y="10" width="15" height="1.6" fill="#4a6ec2"/><rect x="4" y="12.9" width="8.6" height="1.5" fill="#222"/><rect x="13.2" y="12.9" width="1.8" height="1.5" fill="#222"/><rect x="4" y="15.9" width="8.6" height="1.5" fill="#222"/><rect x="13.2" y="15.9" width="1.8" height="1.5" fill="#222"/></g><path d="M1146,440.2 l5.5,6.2 l5.5,-6.2" fill="none" stroke="#8a8a8a" stroke-width="1.1"/><g fill="#4f74bd"><rect x="1168.5" y="435.79999999999995" width="3.2" height="3.2"/><rect x="1173.4" y="435.79999999999995" width="3.2" height="3.2"/><rect x="1178.3" y="435.79999999999995" width="3.6" height="3.2"/></g><path d="M1182.6,432.79999999999995 L1188.8,437.4 L1182.6,442.0Z" fill="#fff" stroke="#4f74bd" stroke-width="2.2" stroke-linejoin="miter"/><path d="M1183.2,464.3 l5.6,6.2 l-5.6,6.2" fill="none" stroke="#8a8a8a" stroke-width="1.1"/><rect x="1202" y="460.4" width="20.4" height="13.8" fill="#fff" stroke="#333" stroke-width="1.8"/><rect x="1202.9" y="461.3" width="3.6" height="12" fill="#e7a3dc"/><path d="M1209.6,466.6 l3.2,3.6 l6.2,-7" fill="none" stroke="#1c8c2c" stroke-width="2.4"/><path d="M1207.4,461.3 v12" stroke="#333" stroke-width="1"/><path d="M1146,500.2 l5.5,6.2 l5.5,-6.2" fill="none" stroke="#8a8a8a" stroke-width="1.1"/><path d="M1168.5,497.4 H1185" stroke="#4f74bd" stroke-width="3.2"/><path d="M1179.6,497.4 l5.6,-5.5 l5.6,5.5 l-5.6,5.5z" fill="#4f74bd"/><circle cx="1185.2" cy="497.4" r="1.7" fill="#8c8c96"/><path d="M1183.2,524.3 l5.6,6.2 l-5.6,6.2" fill="none" stroke="#8a8a8a" stroke-width="1.1"/><g transform="translate(1203,516.2)"><rect x="1" y="1" width="15" height="19.7" fill="#fff" stroke="#4a6ec2" stroke-width="2"/><rect x="1" y="5.4" width="15" height="1.1" fill="#4a6ec2"/><rect x="4" y="7.2" width="7" height="1.1" fill="#d06a8a"/><rect x="12.6" y="7.4" width="2" height="1" fill="#d06a8a"/><rect x="1" y="10" width="15" height="1.6" fill="#4a6ec2"/><rect x="4" y="12.9" width="8.6" height="1.5" fill="#222"/><rect x="13.2" y="12.9" width="1.8" height="1.5" fill="#222"/><rect x="4" y="15.9" width="8.6" height="1.5" fill="#222"/><rect x="13.2" y="15.9" width="1.8" height="1.5" fill="#222"/></g><path d="M1183.2,554.3 l5.6,6.2 l-5.6,6.2" fill="none" stroke="#8a8a8a" stroke-width="1.1"/><g transform="translate(1203,546.2)"><rect x="1" y="1" width="15" height="19.7" fill="#fff" stroke="#4a6ec2" stroke-width="2"/><rect x="1" y="5.4" width="15" height="1.1" fill="#4a6ec2"/><rect x="4" y="7.2" width="7" height="1.1" fill="#d06a8a"/><rect x="12.6" y="7.4" width="2" height="1" fill="#d06a8a"/><rect x="1" y="10" width="15" height="1.6" fill="#4a6ec2"/><rect x="4" y="12.9" width="8.6" height="1.5" fill="#222"/><rect x="13.2" y="12.9" width="1.8" height="1.5" fill="#222"/><rect x="4" y="15.9" width="8.6" height="1.5" fill="#222"/><rect x="13.2" y="15.9" width="1.8" height="1.5" fill="#222"/></g><path d="M1183.2,584.3 l5.6,6.2 l-5.6,6.2" fill="none" stroke="#8a8a8a" stroke-width="1.1"/><g transform="translate(1203,576.2)"><rect x="1" y="1" width="15" height="19.7" fill="#fff" stroke="#4a6ec2" stroke-width="2"/><rect x="1" y="5.4" width="15" height="1.1" fill="#4a6ec2"/><rect x="4" y="7.2" width="7" height="1.1" fill="#d06a8a"/><rect x="12.6" y="7.4" width="2" height="1" fill="#d06a8a"/><rect x="1" y="10" width="15" height="1.6" fill="#4a6ec2"/><rect x="4" y="12.9" width="8.6" height="1.5" fill="#222"/><rect x="13.2" y="12.9" width="1.8" height="1.5" fill="#222"/><rect x="4" y="15.9" width="8.6" height="1.5" fill="#222"/><rect x="13.2" y="15.9" width="1.8" height="1.5" fill="#222"/></g><path d="M1146,620.2 l5.5,6.2 l5.5,-6.2" fill="none" stroke="#8a8a8a" stroke-width="1.1"/><path d="M1174.4,617.4 H1190.8" stroke="#4f74bd" stroke-width="3.2"/><path d="M1168.8,617.4 l5.6,-5.5 l5.6,5.5 l-5.6,5.5z" fill="#4f74bd"/><circle cx="1174.4" cy="617.4" r="1.7" fill="#8c8c96"/><path d="M1183.2,644.3 l5.6,6.2 l-5.6,6.2" fill="none" stroke="#8a8a8a" stroke-width="1.1"/><g transform="translate(1203,636.2)"><rect x="1" y="1" width="15" height="19.7" fill="#fff" stroke="#4a6ec2" stroke-width="2"/><rect x="1" y="5.4" width="15" height="1.1" fill="#4a6ec2"/><rect x="4" y="7.2" width="7" height="1.1" fill="#d06a8a"/><rect x="12.6" y="7.4" width="2" height="1" fill="#d06a8a"/><rect x="1" y="10" width="15" height="1.6" fill="#4a6ec2"/><rect x="4" y="12.9" width="8.6" height="1.5" fill="#222"/><rect x="13.2" y="12.9" width="1.8" height="1.5" fill="#222"/><rect x="4" y="15.9" width="8.6" height="1.5" fill="#222"/><rect x="13.2" y="15.9" width="1.8" height="1.5" fill="#222"/></g><path d="M1146,680.2 l5.5,6.2 l5.5,-6.2" fill="none" stroke="#8a8a8a" stroke-width="1.1"/><g fill="#4f74bd"><rect x="1168.5" y="675.8" width="3.2" height="3.2"/><rect x="1173.4" y="675.8" width="3.2" height="3.2"/><rect x="1178.3" y="675.8" width="3.6" height="3.2"/></g><path d="M1182.6,672.8 L1188.8,677.4 L1182.6,682.0Z" fill="#fff" stroke="#4f74bd" stroke-width="2.2" stroke-linejoin="miter"/><path d="M1183.2,704.3 l5.6,6.2 l-5.6,6.2" fill="none" stroke="#8a8a8a" stroke-width="1.1"/><rect x="1202.2" y="700.4" width="20" height="12.6" rx="5.6" fill="#faf1b8" stroke="#2c2c2c" stroke-width="1.9"/>
    <!-- panel h scrollbar -->
    <rect x="1100" y="770.5" width="394" height="26" fill="#e8e8e8"/>
    <rect x="1100.5" y="771" width="25.4" height="24.6" fill="#fdfdfd" stroke="#b8b8b8"/><rect x="1125.9" y="771" width="338.6" height="24.6" fill="#fdfdfd" stroke="#b8b8b8"/><rect x="1467.4" y="771" width="25" height="24.6" fill="#fdfdfd" stroke="#b8b8b8"/>
    <path d="M1117.4,777.4 v12.6 l-7.6,-6.3z M1476.9,777.1 v12.8 l7.2,-6.4z" fill="#777"/>
    <!-- bottom tabs -->
    <rect x="1100" y="796" width="394" height="24" fill="#e3e3e3"/>
    <rect x="1259.5" y="796" width="103.4" height="24" fill="#fff"/>
    <rect x="1492.7" y="132" width="1.3" height="688" fill="#1f3050"/>
    <rect x="1094" y="818.8" width="400" height="1.2" fill="#1f3050"/>
  </svg>
  <span class="t" style="letter-spacing:-0.764px;left:1105.2px;top:157px;font-size:28.8px;color:#41658c">Traceability</span>
  <span class="t" style="letter-spacing:-0.025px;left:1277.3px;top:196.9px;font-size:15.5px;color:#fff">?</span>
  <span class="t tr" style="letter-spacing:0.337px;left:1165.3px;top:231.3px">Storm Water Management</span>
<span class="t tr" style="letter-spacing:0.048px;left:1198.6px;top:261.3px">owns</span>
<span class="t tr" style="letter-spacing:0.165px;left:1231.6px;top:291.3px">Storm Water Transmission</span>
<span class="t tr" style="letter-spacing:0.237px;left:1231.6px;top:321.3px">Storm Water Storage</span>
<span class="t tr" style="letter-spacing:0.238px;left:1231.6px;top:351.3px">Storm Water Collection</span>
<span class="t tr" style="letter-spacing:0.468px;left:1198.6px;top:381.3px">owned by</span>
<span class="t tr" style="letter-spacing:0.212px;left:1232px;top:411.3px">Waste Water Management</span>
<span class="t tr" style="letter-spacing:0.298px;left:1198.6px;top:441.3px">implements</span>
<span class="t tr" style="letter-spacing:0.032px;left:1232px;top:471.3px">Data Security Classification Policy</span>
<span class="t tr" style="letter-spacing:0.570px;left:1198.6px;top:501.3px">part of</span>
<span class="t tr" style="letter-spacing:0.165px;left:1231.6px;top:531.3px">Storm Water Transmission</span>
<span class="t tr" style="letter-spacing:0.237px;left:1231.6px;top:561.3px">Storm Water Storage</span>
<span class="t tr" style="letter-spacing:0.238px;left:1231.6px;top:591.3px">Storm Water Collection</span>
<span class="t tr" style="letter-spacing:0.638px;left:1198.6px;top:621.3px">composed of</span>
<span class="t tr" style="letter-spacing:0.212px;left:1232px;top:651.3px">Waste Water Management</span>
<span class="t tr" style="letter-spacing:0.309px;left:1198.6px;top:681.3px">depends on</span>
<span class="t tr" style="letter-spacing:0.049px;left:1231.6px;top:711.3px">Secondary Treatment</span>
  <span class="t tr" style="letter-spacing:-0.683px;left:1110.6px;top:809.8px">Browser</span>
  <span class="t tr" style="letter-spacing:-0.136px;left:1189.6px;top:809.8px">Toolbox</span>
  <span class="t tr" style="letter-spacing:-0.357px;left:1269.6px;top:808.8px">Traceability</span>
  <span class="t tr" style="letter-spacing:0.033px;left:1374.6px;top:809.8px">Pan &amp; Zoom</span>
</div>
</body>
</html>
